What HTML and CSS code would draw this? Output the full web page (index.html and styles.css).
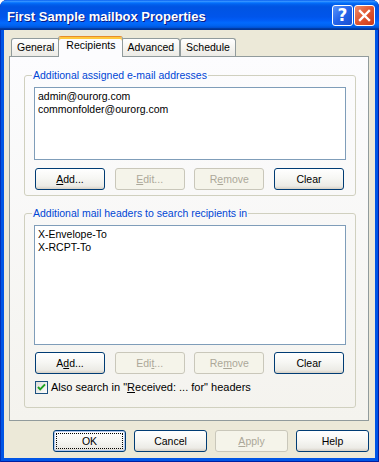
FILE: index.html
```html
<!DOCTYPE html>
<html lang="en">
<head>
  <meta charset="UTF-8">
  <title>First Sample mailbox Properties</title>
  <link rel="stylesheet" href="styles.css">
</head>
<body>
  <div class="window">
    <!-- Title bar -->
    <div class="titlebar">
      <span class="title">First Sample mailbox Properties</span>
      <div class="caption-btns">
        <span class="cap-btn help">?</span>
        <span class="cap-btn close">
          <svg width="19" height="19" viewBox="0 0 19 19">
            <path d="M5 5 L14 14 M14 5 L5 14" stroke="#fff" stroke-width="2.4" stroke-linecap="square"/>
          </svg>
        </span>
      </div>
    </div>

    <div class="client">
      <div class="tabs">
        <div class="tab">General</div>
        <div class="tab active">Recipients</div>
        <div class="tab">Advanced</div>
        <div class="tab">Schedule</div>
      </div>

      <div class="panel">
        <fieldset class="group">
          <legend>Additional assigned e-mail addresses</legend>
          <div class="listbox short">
            <div>admin@ourorg.com</div>
            <div>commonfolder@ourorg.com</div>
          </div>
          <div class="btn-row">
            <button class="btn"><u>A</u>dd...</button>
            <button class="btn" disabled><u>E</u>dit...</button>
            <button class="btn" disabled>R<u>e</u>move</button>
            <button class="btn">Clear</button>
          </div>
        </fieldset>

        <fieldset class="group second">
          <legend>Additional mail headers to search recipients in</legend>
          <div class="listbox tall">
            <div>X-Envelope-To</div>
            <div>X-RCPT-To</div>
          </div>
          <div class="btn-row">
            <button class="btn">A<u>d</u>d...</button>
            <button class="btn" disabled>Edi<u>t</u>...</button>
            <button class="btn" disabled>Re<u>m</u>ove</button>
            <button class="btn">Clear</button>
          </div>
          <label class="check-row">
            <svg width="13" height="13" viewBox="0 0 13 13">
              <defs>
                <linearGradient id="cb" x1="0" y1="0" x2="1" y2="1">
                  <stop offset="0" stop-color="#dcdcd7"/>
                  <stop offset="1" stop-color="#ffffff"/>
                </linearGradient>
              </defs>
              <rect x="0.5" y="0.5" width="12" height="12" fill="url(#cb)" stroke="#1c5180"/>
              <path d="M3 6 L5.2 8.4 L10 3.4" fill="none" stroke="#21a121" stroke-width="2"/>
            </svg>
            <span>Also search in "<u>R</u>eceived: ... for" headers</span>
          </label>
        </fieldset>
      </div>

      <div class="dialog-btns">
        <button class="btn wide default">OK</button>
        <button class="btn wide">Cancel</button>
        <button class="btn wide" disabled><u>A</u>pply</button>
        <button class="btn wide">Help</button>
      </div>
    </div>
  </div>
</body>
</html>
```

FILE: styles.css
```css
/* Page */
body {
  margin: 0;
  font-family: "Liberation Sans", Arial, sans-serif;
  font-size: 10.5px;
  line-height: 13px;
  color: #000;
}
.window {
  width: 379px;
  height: 462px;
  display: flex;
  flex-direction: column;
  background-color: #0055e5;
  border-radius: 7px 7px 0 0;
  box-shadow: inset 1px 0 #0030b8, inset -1px 0 #001ea0, inset 0 -1px #001ea0;
  overflow: hidden;
}

/* Title bar */
.titlebar {
  height: 30px;
  flex-shrink: 0;
  display: flex;
  align-items: center;
  justify-content: space-between;
  padding: 0 4px 0 7px;
  box-sizing: border-box;
  background: linear-gradient(180deg, #0058ee 0%, #3a93ff 4%, #288eff 6%, #127dff 8%, #036ffc 10%, #0262ee 14%, #0057e5 20%, #0054e3 24%, #0055eb 56%, #005bf5 66%, #026afe 76%, #0062ef 86%, #0052d6 92%, #0040ab 94%, #003092 100%);
  border-radius: 7px 7px 0 0;
}
.title {
  color: white;
  font-weight: bold;
  font-size: 13px;
  padding-top: 3px;
  text-shadow: 1px 1px 0 #0a1883;
}
.caption-btns {
  display: flex;
  gap: 1px;
  padding-top: 1px;
}
.cap-btn {
  width: 21px;
  height: 21px;
  box-sizing: border-box;
  border: 1px solid white;
  border-radius: 3px;
  display: flex;
  align-items: center;
  justify-content: center;
}
.help {
  background: linear-gradient(135deg, #5a94fb 0%, #2463ea 50%, #1a4fd0 100%);
  color: white;
  font-weight: bold;
  font-size: 17px;
  font-family: "DejaVu Sans", sans-serif;
}
.close {
  background: linear-gradient(135deg, #ee8d6d 0%, #e25a34 45%, #c9391a 100%);
}

/* Client area */
.client {
  flex: 1;
  margin: 0 4px 4px;
  background-color: #ece9d8;
  padding: 6px 6px 6px 5px;
}

/* Tabs */
.tabs {
  display: flex;
  align-items: flex-end;
  height: 20px;
  padding-left: 2px;
}
.tab {
  height: 18px;
  box-sizing: border-box;
  padding: 2px 5px 0;
  border: 1px solid #919b9c;
  border-bottom: none;
  border-radius: 3px 3px 0 0;
  background: linear-gradient(180deg, #ffffff 0%, #f6f5f1 50%, #ecebe6 100%);
}
.tab.active {
  height: 21px;
  margin: 0 -2px -1px;
  padding: 2px 7px 0;
  position: relative;
  z-index: 1;
  background: #fcfcfe;
  border-top-color: #e68b2c;
  box-shadow: inset 0 2px 0 #ffc83c;
}

/* Tab panel */
.panel {
  border: 1px solid #919b9c;
  background: linear-gradient(180deg, #fcfcfe 0%, #f4f3ee 100%);
  padding: 12px 12px 12px 14px;
}
.group {
  margin: 0;
  border: 1px solid #d0d0bf;
  border-radius: 3px;
  padding: 5px 9px 5px 9px;
}
.group.second {
  margin-top: 11px;
  padding-bottom: 13px;
}
.group legend {
  color: #0046d5;
  padding: 0 1px;
  margin-left: -2px;
}
.listbox {
  box-sizing: border-box;
  border: 1px solid #7f9db9;
  background-color: white;
  padding: 2px 3px;
}
.listbox.short {
  height: 73px;
}
.listbox.tall {
  height: 120px;
}
.btn-row {
  display: flex;
  justify-content: space-between;
  margin-top: 8px;
  padding: 0 2px 0 1px;
}
.group.second .btn-row {
  margin-top: 7px;
}
.check-row {
  display: flex;
  align-items: center;
  gap: 3px;
  margin-top: 7px;
  padding-left: 1px;
  height: 13px;
  font-size: 11px;
}
.check-row svg {
  display: block;
}

/* Buttons */
.btn {
  width: 70px;
  height: 22px;
  padding: 0;
  font-family: inherit;
  font-size: 10.5px;
  color: black;
  border: 1px solid #003c74;
  border-radius: 3px;
  background: linear-gradient(180deg, #ffffff 0%, #f7f7f4 45%, #ecebe6 85%, #d6d0c5 100%);
}
.btn:disabled {
  color: #aca899;
  border-color: #c9c7ba;
  background: #f5f4ea;
}
.btn.wide {
  width: 73px;
}
.btn.default {
  box-shadow: inset 0 0 0 1px #b2c8f0;
  outline: 1px dotted #000;
  outline-offset: -4px;
}
.dialog-btns {
  display: flex;
  justify-content: flex-end;
  gap: 8px;
  margin-top: 9px;
}
```
